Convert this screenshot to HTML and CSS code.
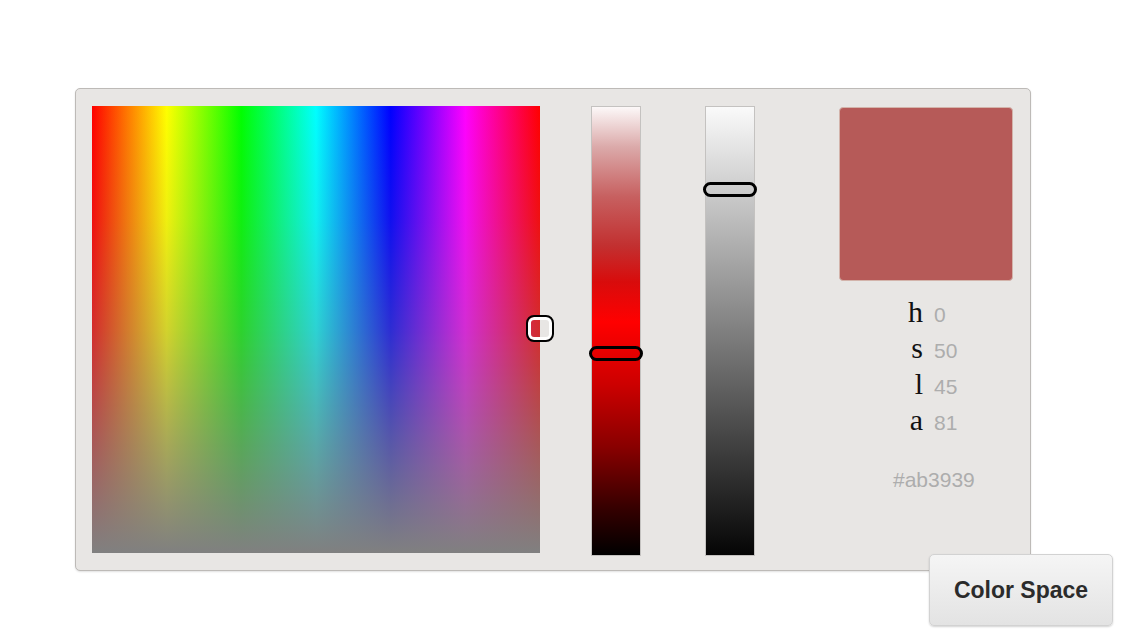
FILE: index.html
```html
<!DOCTYPE html>
<html>
<head>
<meta charset="utf-8">
<title>Color Space</title>
<link rel="stylesheet" href="styles.css">
</head>
<body>
<div class="panel">
  <div class="spectrum">
    <div class="spot"></div>
  </div>
  <div class="bar sat">
    <div class="grip grip-sat"></div>
  </div>
  <div class="bar light">
    <div class="grip grip-light"></div>
  </div>
  <div class="info">
    <div class="swatch"></div>
    <div class="hsla">
      <span class="lbl">h</span><span class="val">0</span>
      <span class="lbl">s</span><span class="val">50</span>
      <span class="lbl">l</span><span class="val">45</span>
      <span class="lbl">a</span><span class="val">81</span>
    </div>
    <div class="hex">#ab3939</div>
  </div>
  <button class="space-btn">Color Space</button>
</div>
</body>
</html>
```
FILE: styles.css
```css
html, body {
  margin: 0;
  padding: 0;
  background: #ffffff;
  height: 639px;
  overflow: hidden;
}

.panel {
  position: relative;
  box-sizing: border-box;
  width: 956px;
  height: 483px;
  margin: 88px 0 0 75px;
  padding: 17px 17px 0 16px;
  border: 1px solid #bdbab7;
  border-radius: 5px;
  background: #e8e6e4;
  box-shadow: 0 1px 2px rgba(0, 0, 0, 0.12);
  display: flex;
  align-items: flex-start;
}

.spectrum {
  position: relative;
  flex: none;
  width: 448px;
  height: 447px;
  background:
    linear-gradient(to bottom,
      rgba(128, 128, 128, 0) 0%,
      rgba(128, 128, 128, 0.12) 25%,
      rgba(128, 128, 128, 0.35) 50%,
      rgba(128, 128, 128, 0.68) 75%,
      #808080 100%),
    linear-gradient(to right, #ff0000 0%, #ffff00 16.67%, #00ff00 33.33%, #00ffff 50%, #0000ff 66.67%, #ff00ff 83.33%, #ff0000 100%);
}

.spot {
  position: absolute;
  left: 434px;
  top: 209px;
  box-sizing: border-box;
  width: 28px;
  height: 27px;
  border: 2px solid #000;
  border-radius: 8px;
  box-shadow: inset 0 0 0 3px #fff;
}

.bar {
  position: relative;
  flex: none;
  box-sizing: border-box;
  width: 50px;
  height: 450px;
  border: 1px solid #c4c2c0;
}

.sat {
  margin-left: 51px;
  background: linear-gradient(to bottom,
    #fcf8f8 0%, #dba9a9 9%, #c76060 20%, #c23030 31%, #d80c0c 39%,
    #ff0000 48%, #cc0000 62%, #880000 76%, #330000 90%, #000000 100%);
}

.light {
  margin-left: 64px;
  background: linear-gradient(to bottom, #fafafa 0%, #050505 100%);
}

.grip {
  position: absolute;
  left: -3px;
  box-sizing: border-box;
  width: 54px;
  height: 15px;
  border: 3px solid #000;
  border-radius: 8px;
}

.grip-sat {
  top: 239px;
}

.grip-light {
  top: 75px;
}

.info {
  flex: none;
  width: 174px;
  margin-left: 84px;
}

.swatch {
  box-sizing: border-box;
  width: 174px;
  height: 174px;
  margin-top: 1px;
  background: #b65a58;
  border: 1px solid #d3b4ab;
  border-radius: 4px;
}

.hsla {
  display: grid;
  grid-template-columns: 84px auto;
  column-gap: 11px;
  align-items: baseline;
  margin-top: 13px;
}

.lbl {
  text-align: right;
  font-family: "Liberation Serif", "Times New Roman", serif;
  font-size: 30px;
  line-height: 36px;
  color: #111;
}

.val {
  font-family: "Liberation Sans", Arial, sans-serif;
  font-size: 21px;
  line-height: 20px;
  color: #adadad;
}

.hex {
  margin-top: 30px;
  padding-left: 54px;
  font-family: "Liberation Sans", Arial, sans-serif;
  font-size: 21px;
  line-height: 24px;
  color: #adadad;
}

.space-btn {
  position: absolute;
  left: 853px;
  top: 465px;
  box-sizing: border-box;
  width: 184px;
  height: 72px;
  padding: 0;
  border: 1px solid #d2d2d2;
  border-radius: 5px;
  background: linear-gradient(to bottom, #f5f5f5 0%, #e3e3e3 100%);
  box-shadow: 0 1px 2px rgba(0, 0, 0, 0.18);
  font-family: "Liberation Sans", Arial, sans-serif;
  font-weight: bold;
  font-size: 23px;
  color: #2b2b2b;
  cursor: pointer;
}
```
